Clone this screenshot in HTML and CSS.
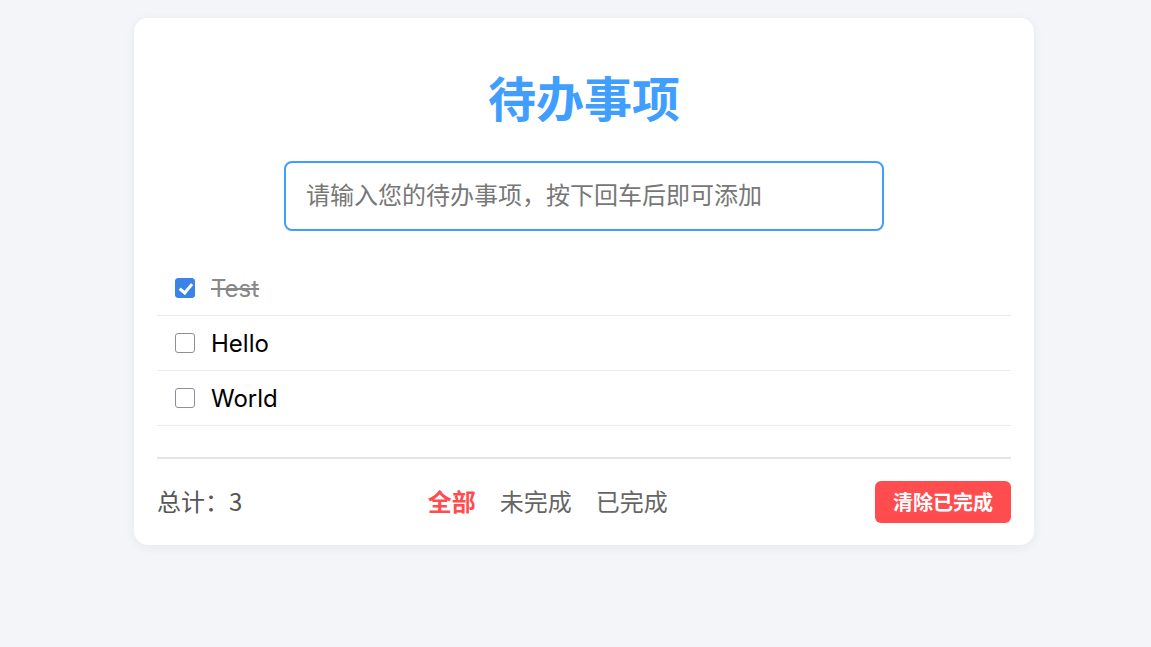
FILE: index.html
```html
<!DOCTYPE html>
<html lang="zh-CN">
  <head>
    <meta charset="UTF-8">
    <meta name="viewport" content="width=device-width, initial-scale=1.0">
    <title>待办事项</title>
    <link rel="stylesheet" href="styles.css">
  </head>
  <body>
    <div class="todo-card">
      <h1 class="todo-title">待办事项</h1>

      <div class="todo-input-wrap">
        <input type="text" class="todo-input" placeholder="请输入您的待办事项，按下回车后即可添加">
      </div>

      <ul class="todo-list">
        <li class="todo-item done">
          <input type="checkbox" class="todo-check" checked>
          <span class="todo-text">Test</span>
        </li>
        <li class="todo-item">
          <input type="checkbox" class="todo-check">
          <span class="todo-text">Hello</span>
        </li>
        <li class="todo-item">
          <input type="checkbox" class="todo-check">
          <span class="todo-text">World</span>
        </li>
      </ul>

      <div class="todo-footer">
        <span class="todo-count">总计：3</span>
        <div class="todo-filters">
          <a href="#" class="filter active">全部</a>
          <a href="#" class="filter">未完成</a>
          <a href="#" class="filter">已完成</a>
        </div>
        <button type="button" class="clear-btn">清除已完成</button>
      </div>
    </div>
  </body>
</html>
```

FILE: styles.css
```css
body {
  margin: 0;
  padding: 18px 0 18px 17px;
  background-color: #f4f5f9;
  font-family: "Inter", "Noto Sans CJK SC", sans-serif;
  color: #111;
}
.todo-card {
  width: 900px;
  margin: 0 auto;
  box-sizing: border-box;
  padding: 53px 23px 22px;
  background-color: #fff;
  border-radius: 14px;
  box-shadow: 0 2px 12px rgba(0, 0, 0, 0.06);
}
.todo-title {
  margin: 0;
  text-align: center;
  font-size: 48px;
  line-height: 58px;
  font-weight: bold;
  color: #409eff;
}
.todo-input-wrap {
  display: flex;
  justify-content: center;
  margin-top: 32px;
}
.todo-input {
  width: 600px;
  height: 70px;
  box-sizing: border-box;
  padding: 0 20px 5px;
  border: 2px solid #409eff;
  border-radius: 8px;
  outline: none;
  font-family: "Noto Sans CJK SC", sans-serif;
  font-size: 24px;
  color: #333;
}
.todo-input::placeholder {
  color: #777;
}
.todo-list {
  list-style: none;
  margin: 30px 0 0;
  padding: 0;
}
.todo-item {
  display: flex;
  align-items: center;
  gap: 16px;
  height: 54px;
  padding-left: 18px;
  border-bottom: 1px solid #ebebeb;
}
.todo-check {
  appearance: none;
  width: 20px;
  height: 20px;
  margin: 0;
  box-sizing: border-box;
  border: 1px solid #8d8d9b;
  border-radius: 3px;
  background-color: #fff;
  position: relative;
}
.todo-check:checked {
  border-color: #3a84e8;
  background-color: #3a84e8;
}
.todo-check:checked::after {
  content: "";
  position: absolute;
  left: 6px;
  top: 2px;
  width: 5px;
  height: 10px;
  border: solid #fff;
  border-width: 0 3px 3px 0;
  transform: rotate(40deg);
}
.todo-text {
  font-size: 24px;
  color: #000;
}
.done .todo-text {
  color: #888;
  text-decoration: line-through;
}
.todo-footer {
  display: flex;
  align-items: center;
  justify-content: space-between;
  margin-top: 31px;
  padding-top: 22px;
  border-top: 2px solid #e4e4e4;
}
.todo-count {
  padding-bottom: 4px;
  font-family: "Noto Sans CJK SC", sans-serif;
  font-size: 24px;
  color: #555;
}
.todo-filters {
  display: flex;
  gap: 24px;
  margin-right: 22px;
  padding-bottom: 4px;
}
.filter {
  font-family: "Noto Sans CJK SC", sans-serif;
  font-size: 24px;
  color: #666;
  text-decoration: none;
}
.filter.active {
  color: #ff4d4f;
  font-weight: bold;
}
.clear-btn {
  width: 136px;
  height: 42px;
  padding: 0 0 2px;
  border: none;
  border-radius: 6px;
  background-color: #ff4d4f;
  color: #fff;
  font-family: "Noto Sans CJK SC", sans-serif;
  font-size: 20px;
  font-weight: bold;
  cursor: pointer;
}
```
